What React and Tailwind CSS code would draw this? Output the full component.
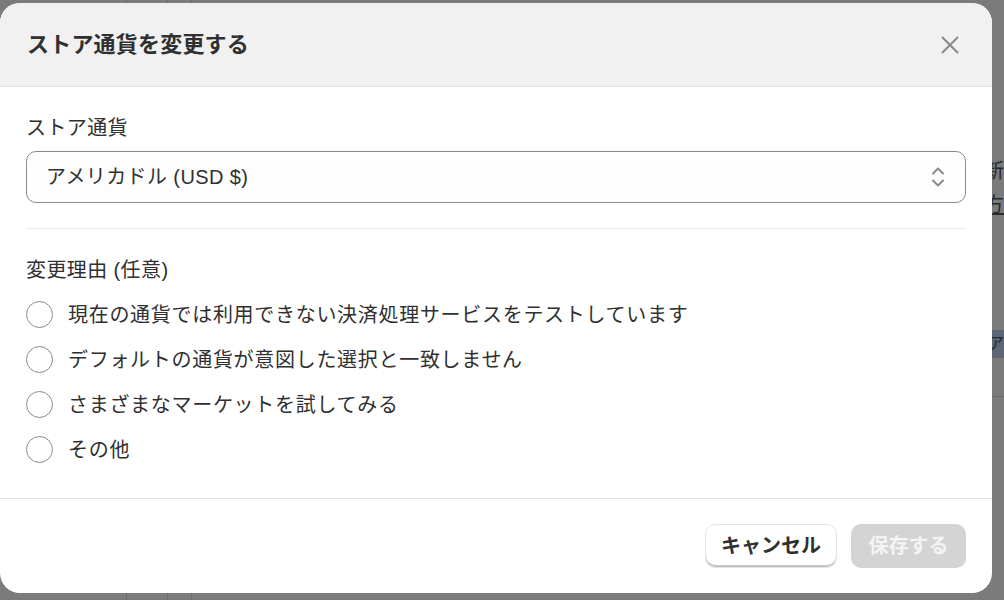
import React from 'react';

const reasons = [
  '現在の通貨では利用できない決済処理サービスをテストしています',
  'デフォルトの通貨が意図した選択と一致しません',
  'さまざまなマーケットを試してみる',
  'その他',
];

const font = { fontFamily: '"Liberation Sans", "Noto Sans CJK JP", sans-serif' };

function App() {
  return (
    <div
      className="relative w-[1004px] h-[600px] overflow-hidden bg-[#7b7b7b] text-[#303030]"
      style={font}
    >
      {/* Dimmed page behind the dialog */}
      <div className="flex h-full">
        <div className="w-[126px] h-full" />
        <div className="w-[41px] h-full border-l border-[#6c6c6c]" />
        <div className="w-[24px] h-full border-l border-[#6c6c6c]" />
        <div className="flex-1 h-full border-l border-[#6c6c6c]" />
      </div>
      <div className="absolute right-0 top-0 w-[12px] h-full flex flex-col text-[20px] text-[#2a2a2a] overflow-hidden">
        <div className="h-[157px]" />
        <div className="-ml-[8px] leading-[28px] whitespace-nowrap">新</div>
        <div className="-ml-[8px] mt-[6px] leading-[28px] whitespace-nowrap underline">方</div>
        <div className="h-[111px]" />
        <div className="-ml-[4px] h-[27px] bg-[#5b6677] text-[16px] text-[#2a2a2a] leading-[27px] whitespace-nowrap">ア</div>
        <div className="h-[1px] bg-[#6a6a6a]" />
        <div className="h-[38px]" />
        <div className="h-[1px] bg-[#6a6a6a]" />
      </div>

      {/* Dialog */}
      <div className="absolute left-0 top-[3px] w-[992px] h-[590px] bg-white rounded-[20px] overflow-hidden flex flex-col">
        <div className="h-[84px] shrink-0 bg-[#f1f1f1] border-b border-[#e3e3e3] flex items-center justify-between pl-[27px] pr-[33px]">
          <h2 className="text-[22px] font-bold text-[#303030] tracking-[0.2px]">ストア通貨を変更する</h2>
          <svg width="18" height="18" viewBox="0 0 18 18" className="text-[#8a8a8a]">
            <path d="M1.5 1.5 L16.5 16.5 M16.5 1.5 L1.5 16.5" stroke="currentColor" strokeWidth="2" strokeLinecap="round" />
          </svg>
        </div>

        <div className="flex-1 px-[26px] pt-[27px]">
          <div className="text-[20px] leading-[28px] tracking-[0.4px]">ストア通貨</div>
          <div className="mt-[9px] h-[52px] rounded-[10px] border border-[#8a8a8a] bg-[#fdfdfd] flex items-center justify-between pl-[19px] pr-[20px]">
            <span className="text-[20px] tracking-[0.4px]">アメリカドル (USD $)</span>
            <svg width="14" height="24" viewBox="0 0 14 24" className="text-[#8a8a8a]">
              <path d="M2 8.5 L7 3.5 L12 8.5 M2 15.5 L7 20.5 L12 15.5" fill="none" stroke="currentColor" strokeWidth="2" strokeLinecap="round" strokeLinejoin="round" />
            </svg>
          </div>
          <div className="mt-[25px] h-[1px] bg-[#ebebeb]" />

          <div className="mt-[27px] text-[20px] leading-[28px] tracking-[0.4px]">変更理由 (任意)</div>
          <div className="mt-[8px] flex flex-col">
            {reasons.map((r) => (
              <label key={r} className="h-[45px] flex items-center gap-[15px]">
                <span className="w-[27px] h-[27px] rounded-full border border-[#8a8a8a] bg-white shrink-0" />
                <span className="text-[20px] tracking-[0.7px]">{r}</span>
              </label>
            ))}
          </div>
        </div>

        <div className="h-[95px] shrink-0 border-t border-[#e3e3e3] flex items-start justify-end gap-[14px] pt-[25px] pr-[26px]">
          <button className="h-[44px] w-[132px] rounded-[10px] bg-white border border-[#e3e3e3] shadow-[inset_0_-2px_0_#c4c4c4] text-[20px] font-bold text-[#303030]">
            キャンセル
          </button>
          <button className="h-[44px] w-[115px] rounded-[10px] bg-[#d4d4d4] text-[20px] font-bold text-[#f4f4f4]">
            保存する
          </button>
        </div>
      </div>
    </div>
  );
}

export default App;
